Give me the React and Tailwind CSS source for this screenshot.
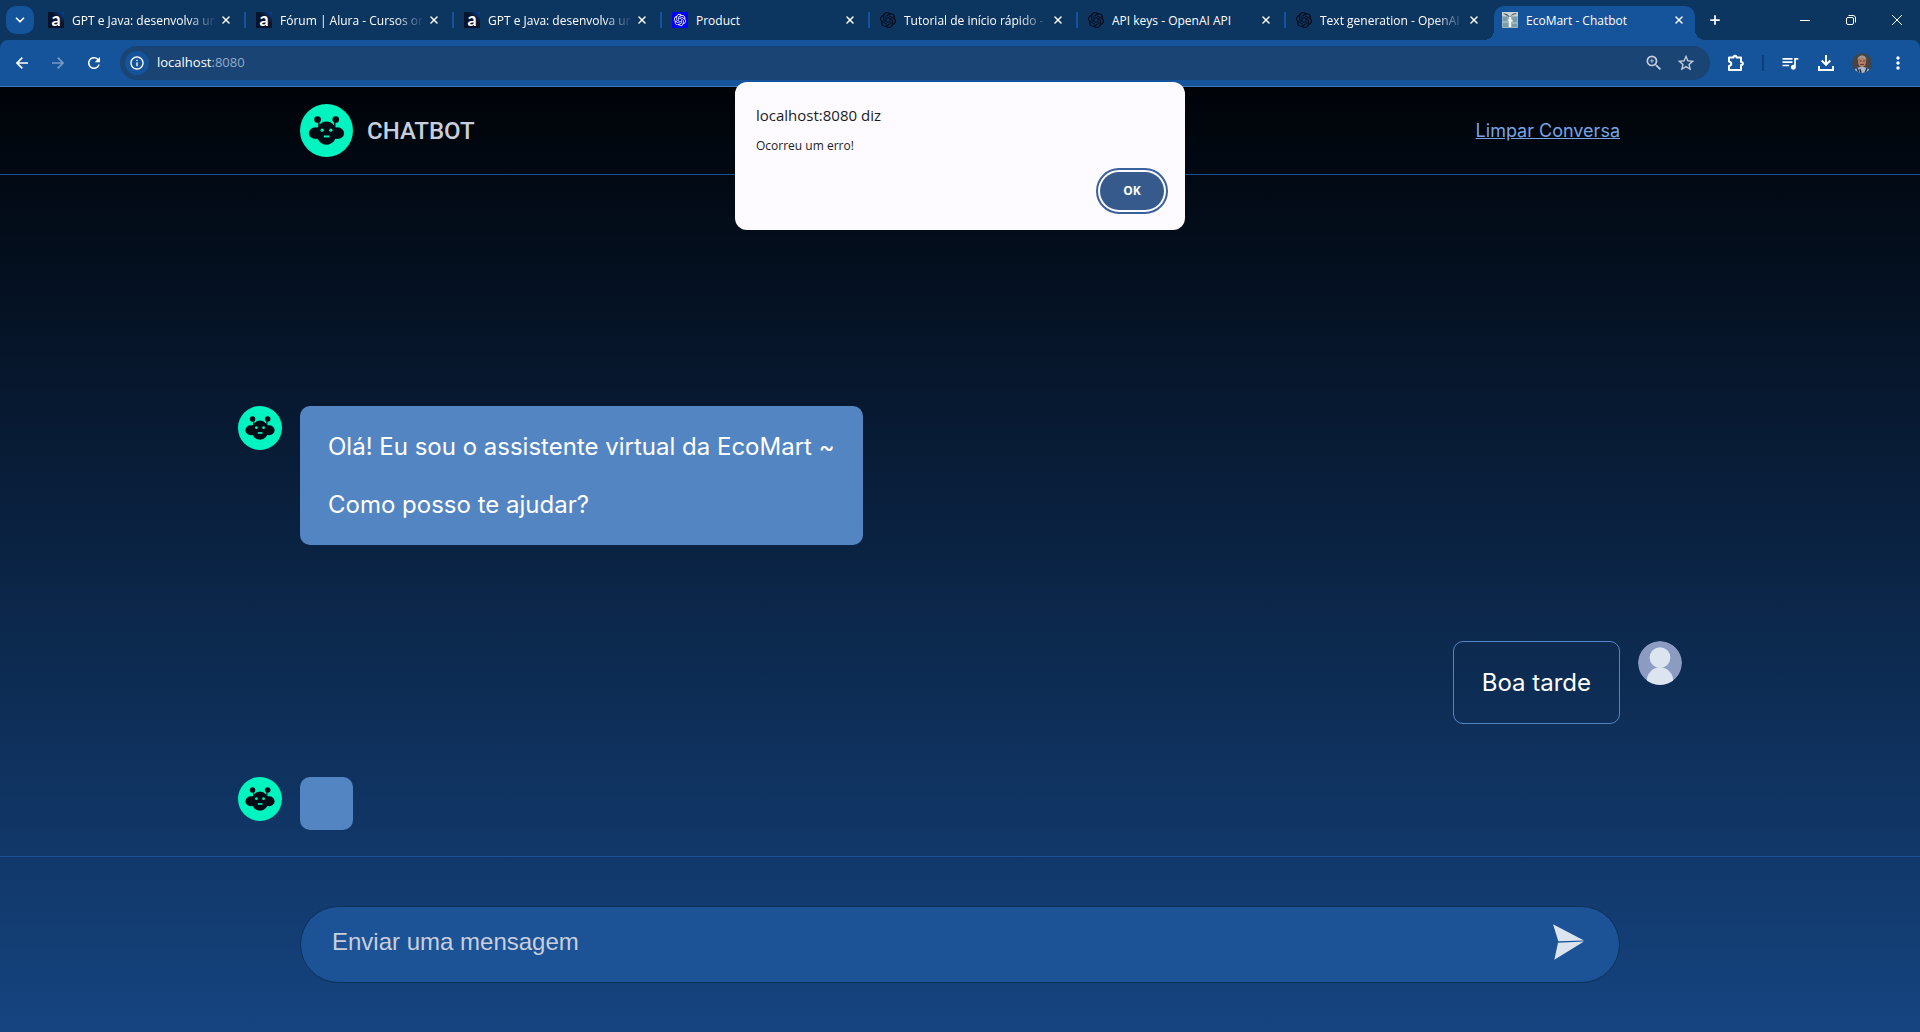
import React, { useState } from "react"
import { MdRefresh, MdInfoOutline, MdZoomIn, MdStarOutline, MdQueueMusic, MdMoreVert } from "react-icons/md"
import { SiOpenai } from "react-icons/si"
import { ChevronDown, Plus, X } from "lucide-react"

const tabs = [
  { id: 1, icon: "alura", title: "GPT e Java: desenvolva un", fade: true },
  { id: 2, icon: "alura", title: "Fórum | Alura - Cursos onl", fade: true },
  { id: 3, icon: "alura", title: "GPT e Java: desenvolva un", fade: true },
  { id: 4, icon: "product", title: "Product" },
  { id: 5, icon: "openai", title: "Tutorial de início rápido -", fade: true },
  { id: 6, icon: "openai", title: "API keys - OpenAI API" },
  { id: 7, icon: "openai", title: "Text generation - OpenAI", fade: true },
]

const messages = [
  { id: 1, from: "bot", text: "Olá! Eu sou o assistente virtual da EcoMart ~\n\nComo posso te ajudar?" },
  { id: 2, from: "user", text: "Boa tarde" },
  { id: 3, from: "bot", text: "" },
]

function TabIcon({ icon }) {
  if (icon === "alura") {
    return (
      <span
        aria-hidden="true"
        className="flex size-4 shrink-0 items-center justify-center bg-linear-to-bl from-[#0b4796] via-[#06142e] via-40% to-[#051026] pb-0.5 font-['Lato'] text-lg leading-4 font-bold"
      >
        a
      </span>
    )
  }
  if (icon === "product") {
    return (
      <span className="flex size-4 shrink-0 items-center justify-center bg-[#0000ff]">
        <SiOpenai className="size-3" />
      </span>
    )
  }
  if (icon === "openai") {
    return <SiOpenai className="size-4 shrink-0 text-[#020a14]" />
  }
  // EcoMart gift box
  return (
    <svg viewBox="0 0 16 16" className="size-4 shrink-0">
      <rect width="16" height="16" rx="1" fill="#9db5bd" />
      <path d="M0 0h16v4H0z" fill="#c9d3d4" />
      <path d="M1 5h5l-1 4H1zM10 5h5v5h-4zM1 11h5v4H1zM10 12h5v3h-5z" fill="#7e9ca8" />
      <path d="M8 5C5 1 2 1 1 2c2 0 4 2 7 3 2-2 4-3 7-3-2-2-5 0-7 3Z" fill="#3c4a50" />
      <path d="M7 5h2v2l2 2-2 1v5H7v-5l-1-2 1-1z" fill="#eef3f2" />
    </svg>
  )
}

function BotAvatar({ className }) {
  return (
    <svg viewBox="0 0 160 160" className={className} role="img" aria-label="Chatbot">
      <circle cx="80" cy="80" r="80" fill="#00f4bf" />
      <g fill="#010b14">
        <circle cx="53" cy="47" r="10" />
        <circle cx="108" cy="47" r="10" />
        <path d="M55 50h4v24h-4zM103 50h4v24h-4z" />
        <ellipse cx="80" cy="88" rx="31" ry="35" />
        <ellipse cx="80" cy="87" rx="40" ry="21" />
        <ellipse cx="47" cy="88" rx="20" ry="18" />
        <ellipse cx="113" cy="88" rx="20" ry="18" />
      </g>
      <g fill="#00f4bf">
        <circle cx="67" cy="79" r="5" />
        <circle cx="93" cy="79" r="5" />
        <path d="M72 95h17v6H72z" />
      </g>
    </svg>
  )
}

function UserAvatar() {
  return (
    <svg viewBox="0 0 132 132" className="size-11 shrink-0 rounded-full" role="img" aria-label="Usuário">
      <circle cx="66" cy="66" r="66" fill="#8b9bc1" />
      <circle cx="66" cy="50" r="31" fill="#dce4ef" />
      <ellipse cx="66" cy="121" rx="40" ry="42" fill="#dce4ef" />
    </svg>
  )
}

function TabTitle({ title, fade = false }) {
  return (
    <span
      className={`ml-2 min-w-0 flex-1 overflow-hidden pt-0.5 whitespace-nowrap ${fade ? "mask-r-from-80%" : ""}`}
    >
      {title}
    </span>
  )
}

function TabStrip() {
  return (
    <div className="flex h-10 items-end bg-[#0c3560] text-white">
      <button
        aria-label="Pesquisar guias"
        className="mb-1.5 ml-1.5 flex size-7 shrink-0 items-center justify-center rounded-[10px] bg-[#15539a]"
      >
        <ChevronDown className="size-3.5" strokeWidth={3} />
      </button>
      <div className="ml-1 flex min-w-0 flex-1 items-end">
        {tabs.map((tab) => (
          <div key={tab.id} className="flex h-[34px] max-w-[208px] min-w-0 flex-1 items-center pb-1.5 pl-2.5">
            <TabIcon icon={tab.icon} />
            <TabTitle title={tab.title} fade={tab.fade} />
            <button aria-label="Fechar guia" className="mr-2.5 ml-0.5 flex size-4 items-center justify-center">
              <X className="size-3" strokeWidth={3} />
            </button>
            <span className={tab.id === 7 ? "w-0.5" : "h-4 w-0.5 bg-[#15539a]"} />
          </div>
        ))}

        {/* Active tab */}
        <div className="relative flex h-[34px] max-w-[201px] min-w-0 flex-1 items-center rounded-t-[10px] bg-[#15539a] px-2 pb-1.5">
          <span className="absolute bottom-0 -left-2.5 size-2.5 bg-[radial-gradient(circle_at_0_0,transparent_10px,#15539a_10px)]" />
          <span className="absolute -right-2.5 bottom-0 size-2.5 bg-[radial-gradient(circle_at_100%_0,transparent_10px,#15539a_10px)]" />
          <TabIcon icon="ecomart" />
          <TabTitle title="EcoMart - Chatbot" />
          <button aria-label="Fechar guia" className="flex size-4 items-center justify-center">
            <X className="size-3" strokeWidth={3} />
          </button>
        </div>
        <button aria-label="Nova guia" className="mb-1.5 ml-1.5 flex size-7 items-center justify-center">
          <Plus className="size-3.5" strokeWidth={3} />
        </button>
      </div>

      {/* Window controls */}
      <div className="flex h-10 shrink-0 items-center">
        <button aria-label="Minimizar" className="flex h-10 w-[46px] items-center justify-center">
          <span className="h-px w-2.5 bg-white" />
        </button>
        <button aria-label="Restaurar" className="flex h-10 w-[46px] items-center justify-center">
          <svg viewBox="0 0 10 10" className="size-2.5" fill="none" stroke="currentColor">
            <rect x="0.5" y="2.5" width="7" height="7" rx="1.5" />
            <path d="M2.5.5H7A2.5 2.5 0 0 1 9.500 3v4.500" />
          </svg>
        </button>
        <button aria-label="Fechar" className="flex h-10 w-[46px] items-center justify-center">
          <svg viewBox="0 0 10 10" className="size-2.5" stroke="currentColor">
            <path d="M0 0l10 10M10 0L0 10" />
          </svg>
        </button>
      </div>
    </div>
  )
}

function Toolbar() {
  return (
    <div className="bg-[#0c3560]">
      <div className="flex h-[47px] items-center rounded-t-lg border-b border-[#4379bd] bg-[#15539a] px-1 text-white">
        <button aria-label="Voltar" className="flex size-9 items-center justify-center">
          <svg viewBox="0 0 12 12" className="size-3" fill="none" stroke="currentColor" strokeWidth="1.700">
            <path d="M12 6H1.200M6.300.7L1 6l5.300 5.300" />
          </svg>
        </button>
        <button aria-label="Avançar" className="flex size-9 items-center justify-center text-[#7799c6]">
          <svg viewBox="0 0 12 12" className="size-3" fill="none" stroke="currentColor" strokeWidth="1.700">
            <path d="M0 6h10.800M5.700.7L11 6l-5.300 5.300" />
          </svg>
        </button>
        <button aria-label="Recarregar" className="flex size-9 items-center justify-center">
          <MdRefresh className="size-[18px]" />
        </button>

        {/* Address bar */}
        <div className="ml-2 flex h-[34px] flex-1 items-center rounded-full bg-[#194474] px-1">
          <button
            aria-label="Informações do site"
            className="ml-px flex size-6 items-center justify-center rounded-full bg-[#15539a]"
          >
            <MdInfoOutline className="size-4" />
          </button>
          <p className="ml-2 flex-1 text-[13px]">
            localhost<span className="text-[#94abc8]">:8080</span>
          </p>
          <button aria-label="Zoom" className="flex size-8 items-center justify-center text-[#c7cfda]">
            <MdZoomIn className="size-5" />
          </button>
          <button aria-label="Adicionar aos favoritos" className="mr-1 flex size-8 items-center justify-center text-[#c7cfda]">
            <MdStarOutline className="size-5" />
          </button>
        </div>

        <button aria-label="Extensões" className="ml-2 flex size-9 items-center justify-center">
          <svg viewBox="0 0 18 18" className="size-[18px]" fill="none" stroke="currentColor" strokeWidth="2">
            <path
              strokeLinejoin="round"
              d="M2 3.500h4.500C6.500 1 9.500 1 9.500 3.500H14V8c2.500 0 2.500 3 0 3v5H2v-4c3-.5 3-4 0-4.500z"
            />
          </svg>
        </button>
        <span className="mx-2 h-4 w-0.5 bg-[#0c3f78]" />
        <button aria-label="Controle de mídia" className="flex size-9 items-center justify-center">
          <MdQueueMusic className="size-5" />
        </button>
        <button aria-label="Downloads" className="flex size-9 items-center justify-center">
          <svg viewBox="0 0 16 16" className="size-4" fill="none" stroke="currentColor" strokeWidth="2">
            <path d="M8 0v9.500M3.700 5.500L8 9.800l4.300-4.300M1 11v4h14v-4" />
          </svg>
        </button>
        <button aria-label="Perfil" className="flex size-9 items-center justify-center">
          <svg viewBox="0 0 20 20" className="size-5 rounded-full">
            <rect width="20" height="20" fill="#454547" />
            <path d="M2 20c0-4 3-6 8-6s8 2 8 6z" fill="#a9b8d0" />
            <path d="M5 15l2 5M8 16l1 4M15 15l-2 5" stroke="#1d2b45" strokeWidth="1.500" />
            <ellipse cx="10" cy="8.500" rx="4" ry="5.800" fill="#b77c66" />
            <path d="M5.700 7C5 1 15 1 14.300 7 13 4 7 4 5.700 7z" fill="#a09a94" />
            <path d="M7.500 8h2M11 8h2M8 11.500h4" stroke="#693d31" />
          </svg>
        </button>
        <button aria-label="Menu" className="flex size-9 items-center justify-center">
          <MdMoreVert className="size-5" />
        </button>
      </div>
    </div>
  )
}

function ErrorDialog({ onClose }) {
  return (
    <div
      role="alertdialog"
      aria-labelledby="dialog-title"
      className="absolute top-[82px] left-1/2 flex h-[148px] w-[450px] -translate-x-1/2 flex-col rounded-xl bg-[#fdfbff] px-[21px] pt-[22px] pb-5 text-[#1b1b1f]"
    >
      <h2 id="dialog-title" className="text-[15px] leading-[22px]">
        localhost:8080 diz
      </h2>
      <p className="mt-2.5 text-xs leading-5">Ocorreu um erro!</p>
      <button
        onClick={onClose}
        className="mt-auto h-[38px] w-16 self-end rounded-full bg-[#365a8c] text-xs font-bold text-white outline-2 outline-offset-2 outline-[#3b619d]"
      >
        OK
      </button>
    </div>
  )
}

function Message({ message }) {
  if (message.from === "user") {
    return (
      <li className="mt-[43px] flex items-start justify-end gap-[18px]">
        <p className="rounded-[10px] border border-[#5485c3] px-7 py-[26px] whitespace-pre-line">{message.text}</p>
        <UserAvatar />
      </li>
    )
  }
  return (
    <li className="flex items-start gap-[18px]">
      <BotAvatar className="size-11 shrink-0" />
      {message.text ? (
        <p className="rounded-[10px] bg-[#5485c3] px-7 py-[26px] whitespace-pre-line">{message.text}</p>
      ) : (
        <p className="size-[53px] rounded-[10px] bg-[#5485c3]" />
      )}
    </li>
  )
}

export default function App() {
  const [showError, setShowError] = useState(true)
  const [text, setText] = useState("")

  return (
    <div className="relative flex min-h-screen flex-col font-['Open_Sans','Noto_Sans',sans-serif] text-xs">
      <TabStrip />
      <Toolbar />

      <div className="flex flex-1 flex-col bg-linear-to-b/srgb from-[#000308] to-[#154480] font-['Inter',sans-serif]">
        <header className="border-b border-[#1b5199]">
          <div className="mx-auto flex h-[87px] max-w-[1320px] items-center justify-between">
            <div className="flex items-center gap-[14px]">
              <BotAvatar className="size-[53px]" />
              <h1 className="font-['Roboto',sans-serif] text-2xl font-medium text-[#c8cedd]">CHATBOT</h1>
            </div>
            <a href="#limpar" className="text-lg text-[#77a4e0] underline">
              Limpar Conversa
            </a>
          </div>
        </header>

        <main className="mx-auto flex w-full max-w-[1444px] flex-1 flex-col justify-end pb-[26px]">
          <ul className="flex flex-col gap-[53px] text-2xl leading-[29px] text-white">
            {messages.map((message) => (
              <Message key={message.id} message={message} />
            ))}
          </ul>
        </main>

        <footer className="border-t border-[#1b5199] py-[49px]">
          <form
            onSubmit={(e) => e.preventDefault()}
            className="mx-auto flex h-[77px] max-w-[1320px] items-center rounded-full border border-[#0d3059] bg-[#1c5396] pr-[35px] pb-1.5 pl-[31px]"
          >
            <input
              type="text"
              aria-label="Mensagem"
              placeholder="Enviar uma mensagem"
              value={text}
              onChange={(e) => setText(e.target.value)}
              className="min-w-0 flex-1 bg-transparent font-['Liberation_Sans',sans-serif] text-2xl text-white outline-none placeholder:text-[#c8cedd]"
            />
            <button type="submit" aria-label="Enviar">
              <svg viewBox="0 0 93 107" className="h-9 w-[31px]" fill="#dce4ef">
                <path d="M0 0l93 49-77 2zM15 56l78-4L4 107z" />
              </svg>
            </button>
          </form>
        </footer>
      </div>

      {showError && <ErrorDialog onClose={() => setShowError(false)} />}
    </div>
  )
}
